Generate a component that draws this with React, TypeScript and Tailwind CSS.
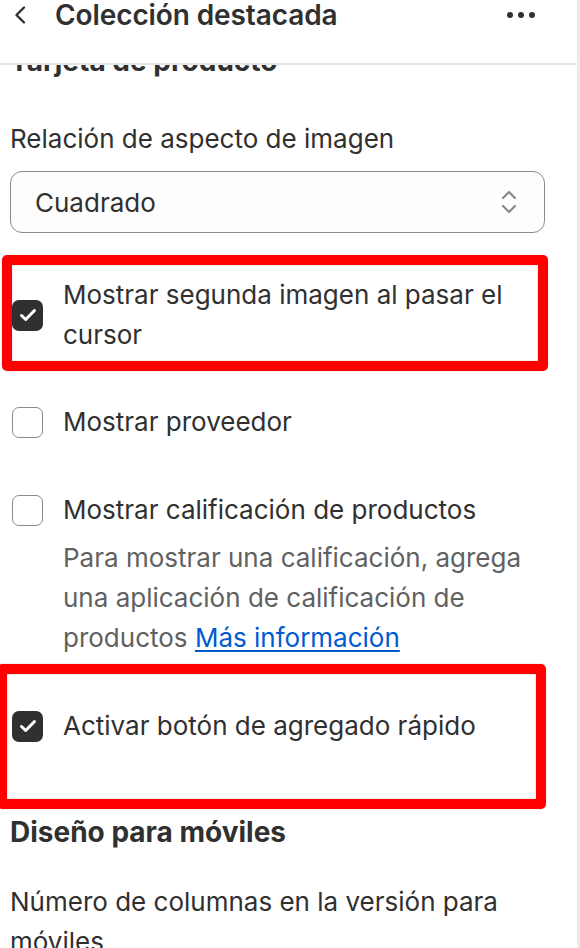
import React from "react";

function Checkbox({ checked }: { checked: boolean }) {
  if (checked) {
    return (
      <div className="flex h-[31px] w-[31px] shrink-0 items-center justify-center rounded-[7px] bg-[#303030]">
        <svg width="20" height="20" viewBox="0 0 20 20" fill="none">
          <path d="M3.5 10.5l4.2 4 8.8-9" stroke="#fff" strokeWidth="3" strokeLinecap="round" strokeLinejoin="round" />
        </svg>
      </div>
    );
  }
  return <div className="h-[31px] w-[31px] shrink-0 rounded-[7px] border-[1.5px] border-[#8a8a8a] bg-white" />;
}

function Row({ checked, label }: { checked: boolean; label: string }) {
  return (
    <div className="flex items-center gap-5">
      <Checkbox checked={checked} />
      <span className="leading-10">{label}</span>
    </div>
  );
}

function Highlight({ className }: { className: string }) {
  return (
    <div
      className={`pointer-events-none absolute rounded-[5px] border-[10px] border-[#ff0000] shadow-[inset_0_0_2px_rgba(0,0,0,0.25),0_0_2px_rgba(0,0,0,0.2)] ${className}`}
    />
  );
}

export default function App() {
  return (
    <div
      className="relative h-[948px] w-[580px] overflow-hidden border-r-[3px] border-[#ebebeb] bg-white text-[26px] text-[#303030]"
      style={{ fontFamily: "Inter, 'Noto Sans', sans-serif" }}
    >
      <header className="relative z-10 h-[65px] border-b-2 border-[#e5e5e5] bg-white">
        <div className="flex h-[30px] items-center pl-[13px] pr-[42px]">
          <svg width="14" height="20" viewBox="0 0 14 20" fill="none">
            <path d="M11 2.5L3.5 10l7.5 7.5" stroke="#303030" strokeWidth="2.4" strokeLinecap="round" strokeLinejoin="round" />
          </svg>
          <h1 className="ml-[28px] text-[28px] font-semibold tracking-[-0.1px]">Colección destacada</h1>
          <div className="ml-auto flex gap-[5px]">
            <span className="h-[6px] w-[6px] rounded-full bg-[#303030]" />
            <span className="h-[6px] w-[6px] rounded-full bg-[#303030]" />
            <span className="h-[6px] w-[6px] rounded-full bg-[#303030]" />
          </div>
        </div>
      </header>

      <div className="pl-[10px] pr-[32px]">
        <h2 className="-mt-[24px] text-[28px] font-bold leading-10">Tarjeta de producto</h2>

        <p className="mt-[38px] leading-10">Relación de aspecto de imagen</p>
        <div className="mt-[12px] flex h-[62px] items-center justify-between rounded-[12px] border border-[#8a8a8a] bg-[#fdfdfd] pl-[24px] pr-[26px]">
          <span>Cuadrado</span>
          <svg width="18" height="26" viewBox="0 0 18 26" fill="none">
            <path d="M3 9l6-6 6 6M3 17l6 6 6-6" stroke="#8a8a8a" strokeWidth="2.2" strokeLinecap="round" strokeLinejoin="round" />
          </svg>
        </div>

        <div className="relative mt-[42px] pl-[2px]">
          <Row checked label="Mostrar segunda imagen al pasar el cursor" />
          <Highlight className="-top-[20px] -bottom-[16px] -left-[8px] -right-[3px]" />
        </div>

        <div className="mt-[47px] pl-[2px]">
          <Row checked={false} label="Mostrar proveedor" />
        </div>

        <div className="mt-[48px] pl-[2px]">
          <Row checked={false} label="Mostrar calificación de productos" />
          <p className="mt-[8px] pl-[51px] leading-10 text-[#616161]">
            Para mostrar una calificación, agrega una aplicación de calificación de productos{" "}
            <a className="text-[#005bd3] underline underline-offset-[3px]">Más información</a>
          </p>
        </div>

        <div className="relative mt-[48px] pl-[2px]">
          <Row checked label="Activar botón de agregado rápido" />
          <Highlight className="-top-[42px] -bottom-[63px] -left-[13px] right-[-1px]" />
        </div>

        <h2 className="mt-[66px] text-[28px] font-bold leading-10">Diseño para móviles</h2>
        <p className="mt-[30px] leading-10">Número de columnas en la versión para móviles</p>
      </div>
    </div>
  );
}
